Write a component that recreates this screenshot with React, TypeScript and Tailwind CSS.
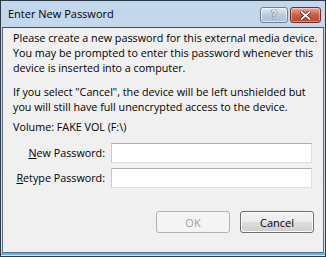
import React from "react";

const font = { fontFamily: '"Open Sans", "Noto Sans", Arial, sans-serif' };

function HelpButton() {
  return (
    <div className="w-[28px] h-[16px] rounded-[3px] border border-[#6d7f93] bg-gradient-to-b from-[#e4edf7] via-[#b9cbe0] to-[#a9c0da] flex items-center justify-center shadow-[inset_0_0_0_1px_rgba(255,255,255,0.6)]">
      <span className="text-[12px] font-bold leading-none text-[#eef3f9] [text-shadow:0_0_1px_#2b3d52,0_0_1px_#2b3d52]">?</span>
    </div>
  );
}

function CloseButton() {
  return (
    <div className="w-[31px] h-[16px] rounded-[3px] border border-[#6b2c22] bg-gradient-to-b from-[#e9a99c] via-[#cf5a42] to-[#c4432c] flex items-center justify-center shadow-[inset_0_0_0_1px_rgba(255,255,255,0.4)]">
      <svg width="11" height="9" viewBox="0 0 11 9">
        <path d="M1.5 1 L9.5 8 M9.5 1 L1.5 8" stroke="#4a1a12" strokeWidth="3.2" strokeLinecap="square" />
        <path d="M1.5 1 L9.5 8 M9.5 1 L1.5 8" stroke="#ffffff" strokeWidth="1.8" strokeLinecap="square" />
      </svg>
    </div>
  );
}

function VistaButton({ label, disabled }: { label: string; disabled?: boolean }) {
  if (disabled) {
    return (
      <div className="w-[74px] h-[22px] rounded-[3px] border border-[#adb2b5] bg-[#f4f4f4] flex items-center justify-center text-[11px] text-[#a0a0a0]">
        {label}
      </div>
    );
  }
  return (
    <div className="w-[74px] h-[22px] rounded-[3px] border border-[#707070] bg-[linear-gradient(to_bottom,#f2f2f2_0%,#ebebeb_50%,#dddddd_50%,#cfcfcf_100%)] shadow-[inset_0_0_0_1px_#fcfcfc] flex items-center justify-center text-[11px] text-black">
      {label}
    </div>
  );
}

function Field({ children }: { children: React.ReactNode }) {
  return (
    <div className="flex items-center gap-[6px]">
      <div className="w-[92px] text-right whitespace-nowrap text-black">{children}</div>
      <div className="w-[201px] h-[20px] bg-white border border-[#dbdfe6] border-t-[#abadb3] border-l-[#c5c9d0]" />
    </div>
  );
}

export default function App() {
  return (
    <div style={font} className="w-[326px] h-[257px] border border-[#2c3a48] bg-gradient-to-b from-[#c2d6ec] to-[#d9e6f3] flex flex-col overflow-hidden">
      <div className="h-[26px] flex items-center pl-[7px] pr-[4px]">
        <span className="text-[11px] text-black flex-1">Enter New Password</span>
        <div className="flex gap-[2px] mt-[2px]">
          <HelpButton />
          <CloseButton />
        </div>
      </div>
      <div className="flex-1 mx-[1px] mb-[3px] border border-[#5b6b7c] border-t-[#3f4e5e] bg-[#f0f0f0] pl-[10px] pr-[4px] pt-[3px] text-[10.75px] leading-[15px] text-black whitespace-nowrap">
        <p>
          Please create a new password for this external media device.
          <br />
          You may be prompted to enter this password whenever this
          <br />
          device is inserted into a computer.
        </p>
        <p className="mt-[9px]">
          If you select "Cancel", the device will be left unshielded but
          <br />
          you will still have full unencrypted access to the device.
        </p>
        <p className="mt-[5px]">Volume: FAKE VOL (F:\)</p>
        <div className="mt-[8px] flex flex-col gap-[5px]">
          <Field>
            <span className="underline">N</span>ew Password:
          </Field>
          <Field>
            <span className="underline">R</span>etype Password:
          </Field>
        </div>
        <div className="mt-[23px] flex justify-end gap-[10px] pr-[5px]">
          <VistaButton label="OK" disabled />
          <VistaButton label="Cancel" />
        </div>
      </div>
      <div className="h-[2px] bg-[#5fb4e0] -mt-[3px] mb-[1px]" />
    </div>
  );
}
